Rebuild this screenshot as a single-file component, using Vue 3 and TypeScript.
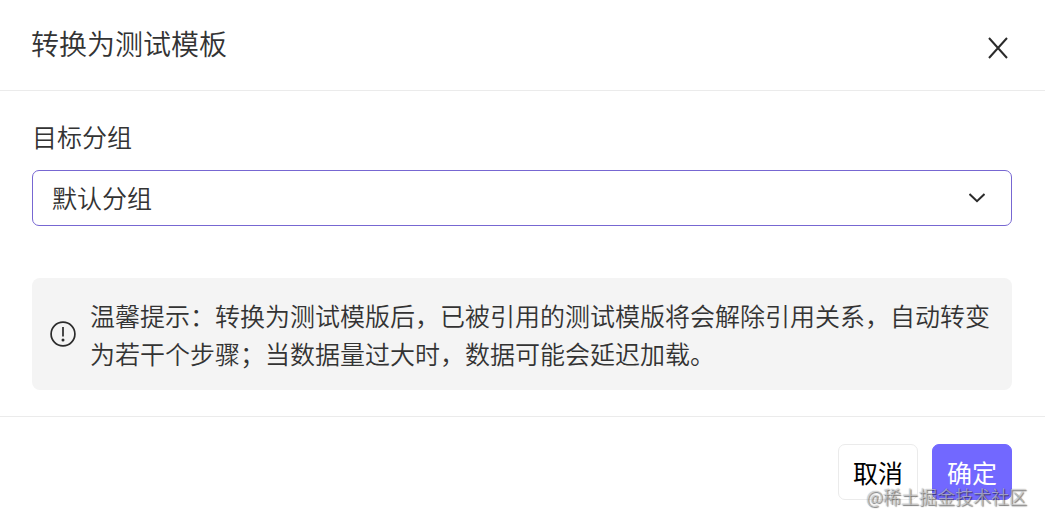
<script setup lang="ts">
import { ref } from 'vue'

const groups: string[] = ['默认分组']
const group = ref<string>(groups[0])
</script>

<template>
  <section class="dialog" role="dialog" aria-labelledby="dialog-title">
    <header class="header">
      <h1 id="dialog-title" class="title">转换为测试模板</h1>
      <button class="close" type="button" aria-label="关闭">
        <svg viewBox="0 0 20 22" width="20" height="22" aria-hidden="true">
          <path d="M1 1 L19 21 M19 1 L1 21" />
        </svg>
      </button>
    </header>

    <main class="body">
      <label class="label" for="group">目标分组</label>
      <div class="select-wrap">
        <select id="group" v-model="group" class="select">
          <option v-for="item in groups" :key="item" :value="item">{{ item }}</option>
        </select>
        <svg class="chevron" viewBox="0 0 16 10" width="16" height="10" aria-hidden="true">
          <path d="M0.5 1 L8 8.2 L15.5 1" />
        </svg>
      </div>

      <div class="notice">
        <svg class="notice-icon" viewBox="0 0 26 26" width="26" height="26" aria-hidden="true">
          <circle cx="13" cy="13" r="11.9" />
          <path d="M13 6 V15.5" />
          <circle class="dot" cx="13" cy="19" r="1.5" />
        </svg>
        <p class="notice-text">温馨提示：转换为测试模版后，已被引用的测试模版将会解除引用关系，自动转变为若干个步骤；当数据量过大时，数据可能会延迟加载。</p>
      </div>
    </main>

    <footer class="footer">
      <button class="btn" type="button">取消</button>
      <button class="btn primary" type="button">确定</button>
      <span class="watermark">@稀土掘金技术社区</span>
    </footer>
  </section>
</template>

<style>
body {
  margin: 0;
  background: #fff;
}
</style>

<style scoped>
.dialog {
  color: #333;
  font-family: "Noto Sans CJK SC", sans-serif;
  font-weight: 350;
  font-size: 25px;
}

.header {
  display: flex;
  align-items: center;
  justify-content: space-between;
  padding: 22px 37px 26px 31px;
  border-bottom: 1px solid #ebebeb;
}

.title {
  margin: 0;
  font-size: 28px;
  font-weight: 350;
  line-height: 42px;
}

.close {
  display: flex;
  padding: 10px 0 0;
  border: 0;
  background: none;
  cursor: pointer;
}

svg {
  fill: none;
  stroke: #2b2b2b;
  stroke-width: 2;
}

.body {
  padding: 27px 33px 26px 32px;
}

.label {
  display: block;
  margin-bottom: 16px;
  line-height: 36px;
}

.select-wrap {
  position: relative;
}

.select {
  display: block;
  box-sizing: border-box;
  width: 100%;
  height: 56px;
  padding: 0 52px 3px 19px;
  border: 1px solid #7767d2;
  border-radius: 7px;
  outline: 0;
  appearance: none;
  background: #fff;
  color: #333;
  font: inherit;
}

.chevron {
  position: absolute;
  top: 23px;
  right: 27px;
  pointer-events: none;
}

.notice {
  display: flex;
  align-items: center;
  gap: 14px;
  margin-top: 52px;
  padding: 18px;
  border-radius: 8px;
  background: #f4f4f4;
}

.notice-icon {
  flex: none;
}

.notice-icon circle,
.notice-icon path {
  stroke-width: 1.7;
}

.notice-icon .dot {
  fill: #2b2b2b;
  stroke: none;
}

.notice-text {
  margin: 0;
  line-height: 38px;
}

.footer {
  position: relative;
  display: flex;
  justify-content: flex-end;
  gap: 14px;
  padding: 27px 33px 25px;
  border-top: 1px solid #ebebeb;
}

.btn {
  height: 56px;
  padding: 0 14px;
  border: 1px solid #ebebeb;
  border-radius: 7px;
  background: #fff;
  color: #000;
  font: inherit;
  font-weight: 400;
  cursor: pointer;
}

.primary {
  border-color: #7268ff;
  background: #7268ff;
  color: #fff;
}

.watermark {
  position: absolute;
  right: 18px;
  bottom: 17px;
  color: rgba(255, 255, 255, 0.5);
  font-size: 18px;
  line-height: 24px;
  text-shadow: 1px 1px 1px rgba(0, 0, 0, 0.5), 0 0 1px rgba(0, 0, 0, 0.4);
  pointer-events: none;
}
</style>
